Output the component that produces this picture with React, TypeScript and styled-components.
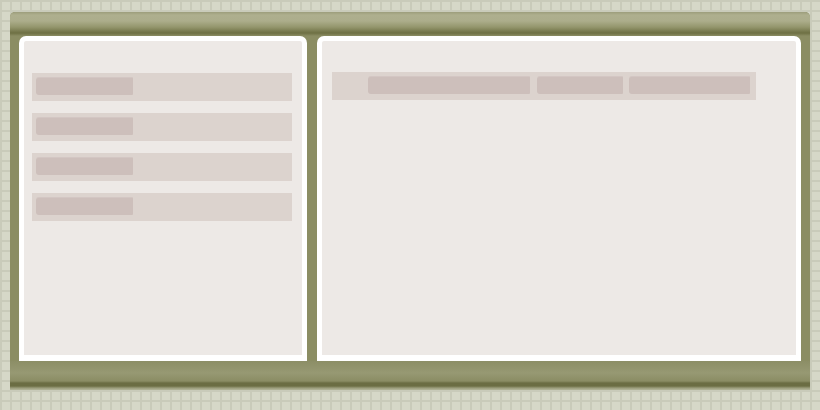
import React from "react";
import styled, { createGlobalStyle } from "styled-components";

const GlobalStyle = createGlobalStyle`
  *, *::before, *::after {
    box-sizing: border-box;
  }
  html, body {
    margin: 0;
    padding: 0;
  }
  body {
    width: 820px;
    height: 410px;
    overflow: hidden;
    font-family: "Liberation Sans", Arial, sans-serif;
    background-color: #d6d8c8;
    background-image:
      linear-gradient(to right, #c9cbba 2px, transparent 2px),
      linear-gradient(to bottom, #c9cbba 2px, transparent 2px);
    background-size: 10px 10px;
    background-position: 0 0;
  }
`;

const Frame = styled.div`
  margin: 12px 10px 0;
  width: 800px;
  height: 378px;
  display: flex;
  flex-direction: column;
  background: #8b8d63;
  border-radius: 5px 5px 0 0;
  overflow: hidden;
`;

const Header = styled.div`
  height: 24px;
  flex: none;
  background: linear-gradient(
    to bottom,
    #9c9d7b 0px,
    #aeaf8e 3px,
    #acad8b 9px,
    #94966d 15px,
    #74764a 20px,
    #6e7044 21px,
    #8b8d63 24px
  );
`;

const Body = styled.div`
  flex: none;
  height: 325px;
  display: flex;
  gap: 10px;
  padding: 0 9px;
`;

const Footer = styled.div`
  flex: 1;
  background: linear-gradient(
    to bottom,
    #8c8e66 0px,
    #979973 12px,
    #8b8d64 20px,
    #6b6d43 22px,
    #6b6d43 25px,
    #9a9c7a 27px,
    #b4b69b 29px
  );
`;

const Panel = styled.section<{ $width: number }>`
  width: ${(p) => p.$width}px;
  flex: none;
  background: #ffffff;
  padding: 5px 5px 6px;
  border-radius: 7px 7px 0 0;
  display: flex;
`;

const PanelInner = styled.div<{ $padTop: number; $padLeft: number }>`
  flex: 1;
  background: #ede9e6;
  border-radius: 2px 2px 0 0;
  padding: ${(p) => p.$padTop}px 10px 0 ${(p) => p.$padLeft}px;
  display: flex;
  flex-direction: column;
  gap: 12px;
`;

const Row = styled.div<{ $width: number }>`
  width: ${(p) => p.$width}px;
  height: 28px;
  padding: 4px;
  background: #dcd3ce;
  display: flex;
  gap: 7px;
`;

const Pill = styled.div<{ $width: number; $indent?: number }>`
  width: ${(p) => p.$width}px;
  margin-left: ${(p) => p.$indent ?? 0}px;
  height: 18px;
  flex: none;
  background: #cdbfbb;
  border-radius: 3px 1px 1px 3px;
  box-shadow: inset 0 1px 0 rgba(255, 255, 255, 0.12);
`;

const sideRows = [0, 1, 2, 3];

export default function App() {
  return (
    <>
      <GlobalStyle />
      <Frame>
        <Header />
        <Body>
          <Panel $width={288}>
            <PanelInner $padTop={32} $padLeft={8}>
              {sideRows.map((i) => (
                <Row key={i} $width={260}>
                  <Pill $width={97} />
                </Row>
              ))}
            </PanelInner>
          </Panel>
          <Panel $width={484}>
            <PanelInner $padTop={31} $padLeft={10}>
              <Row $width={424}>
                <Pill $width={162} $indent={32} />
                <Pill $width={86} />
                <Pill $width={121} $indent={-1} />
              </Row>
            </PanelInner>
          </Panel>
        </Body>
        <Footer />
      </Frame>
    </>
  );
}
